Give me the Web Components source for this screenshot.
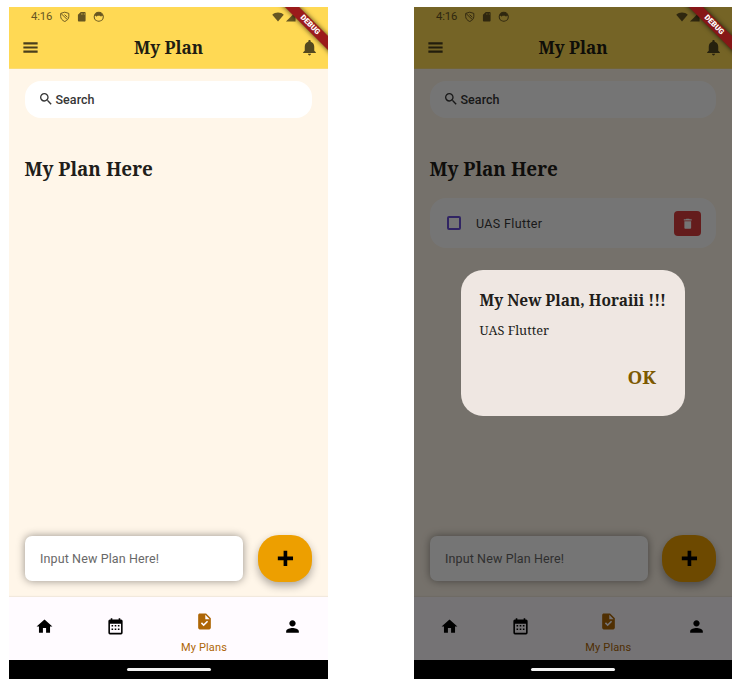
<!DOCTYPE html>
<html lang="en">
<head>
<meta charset="utf-8">
<title>My Plan</title>
<style>
html,body{margin:0;background:#fff;width:745px;height:689px;overflow:hidden}
body{font-family:Roboto,"Noto Sans",sans-serif}
main{display:grid;grid-template-columns:319px 318px;column-gap:86px;padding:7px 0 0 9px;height:672px}
</style>
</head>
<body>
<main>
<plan-phone>
  <plan-title-bar slot="top">My Plan</plan-title-bar>
  <plan-search>Search</plan-search>
  <plan-heading>My Plan Here</plan-heading>
</plan-phone>
<plan-phone dimmed>
  <plan-title-bar slot="top">My Plan</plan-title-bar>
  <plan-search>Search</plan-search>
  <plan-heading>My Plan Here</plan-heading>
  <plan-item>UAS Flutter</plan-item>
  <plan-dialog slot="dialog" heading="My New Plan, Horaiii !!!" action="OK">UAS Flutter</plan-dialog>
</plan-phone>
</main>
<script>
const ICONS = {
  menu:'<path d="M3 18.500h18v-2.600H3zm0-5.200h18v-2.600H3zm0-7.800v2.600h18V5.500z"/>',
  bell:'<path d="M12 22c1.1 0 2-.9 2-2h-4c0 1.1.9 2 2 2zm6-6v-5c0-3.070-1.630-5.640-4.500-6.320V4c0-.83-.67-1.500-1.500-1.500s-1.500.67-1.500 1.500v.68C7.640 5.360 6 7.920 6 11v5l-2 2v1h16v-1z"/>',
  search:'<path d="M15.500 14h-.79l-.28-.27A6.471 6.471 0 0 0 16 9.500 6.500 6.500 0 1 0 9.500 16c1.610 0 3.090-.59 4.230-1.570l.27.28v.79l5 4.990L20.490 19zm-6 0C7.010 14 5 11.990 5 9.500S7.010 5 9.500 5 14 7.010 14 9.500 11.990 14 9.500 14z"/>',
  home:'<path d="M10 20v-6h4v6h5v-8h3L12 3 2 12h3v8z"/>',
  calendar:'<path d="M9,10V12H7V10H9M13,10V12H11V10H13M17,10V12H15V10H17M19,3A2,2 0 0,1 21,5V20A2,2 0 0,1 19,22H5A2,2 0 0,1 3,20V5A2,2 0 0,1 5,3H6V1.500H8V3H16V1.500H18V3H19M19,20V8.500H5V20H19M9,14.500V16.500H7V14.500H9M13,14.500V16.500H11V14.500H13M17,14.500V16.500H15V14.500H17"/>',
  task:'<path d="M14 2H6c-1.100 0-1.990.9-1.990 2L4 20c0 1.100.89 2 1.990 2H18c1.100 0 2-.9 2-2V8zm-3.060 16L7.400 14.460l1.410-1.410 2.120 2.120 4.240-4.240 1.410 1.410zM13 9V3.500L18.500 9z"/>',
  person:'<path d="M12 12c2.210 0 4-1.790 4-4s-1.790-4-4-4-4 1.790-4 4 1.790 4 4 4zm0 2c-2.670 0-8 1.340-8 4v2h16v-2c0-2.660-5.330-4-8-4z"/>',
  plus:'<path d="M9.600 2.300h4.600v7.200h7.300v4.600h-7.300v7.400H9.600v-7.400H2.300V9.500h7.300z"/>',
  trash:'<path d="M6 19c0 1.100.9 2 2 2h8c1.100 0 2-.9 2-2V7.500H6zM19 4h-3.500l-1-1h-5l-1 1H5v2h14z"/>',
  shield:'<path fill="none" stroke="currentColor" stroke-width="2" d="M12 2.500L20.500 5v6.500c0 4.500-3.200 8-8.500 10.500-5.300-2.500-8.500-6-8.500-10.500V5zM4.500 5.500L17.500 18M11.500 7.500l6 5.500"/>',
  sd:'<path d="M18 2h-8L4 8v12c0 1.100.9 2 2 2h12c1.100 0 2-.9 2-2V4c0-1.100-.9-2-2-2zm-6 5.500h-1.300V5H12zm3 0h-1.300V5H15zm3 0h-1.300V5H18z"/>',
  face:'<circle cx="12" cy="12" r="9.500" fill="none" stroke="currentColor" stroke-width="2.200"/><path d="M3 10.500C4 5 7.500 2.500 12 2.500S20 5 21 10.500l-3-.5-1 2-2.500-2h-5L7 12l-1-2z"/>',
  wifi:'<path d="M12 21L.5 7.500C3.500 4.800 7.500 3 12 3s8.500 1.800 11.500 4.500z"/>',
  signal:'<path d="M2 22h20V2z"/>'
};

function define(name, render){
  customElements.define(name, class extends HTMLElement{
    connectedCallback(){
      if(this.shadowRoot) return;
      this.attachShadow({mode:'open'}).innerHTML = render(this);
    }
  });
}

define('plan-icon', el => `<style>:host{display:block;flex:none;width:var(--size,19px);height:var(--size,19px)}svg{display:block;width:100%;height:100%;fill:currentColor}</style>
<svg viewBox="0 0 24 24">${ICONS[el.getAttribute('name')]}</svg>`);

define('plan-title-bar', () => `<style>
:host{display:flex;flex-direction:column;height:62px;background:#ffd954;color:#54481f;box-sizing:border-box;border-bottom:1px solid #fbdc77}
.status{display:flex;align-items:center;height:19px;padding:0 32px 0 22px;font-size:11.300px;color:#675621}
.status span{width:28px;letter-spacing:-.15px;line-height:20px}
.status plan-icon{--size:11.500px}
.sp{flex:1}
.app{display:flex;align-items:center;height:42px;padding:0 9px 0 12px}
h1{flex:1;text-align:center;margin:0 3px 0 0;padding-top:2px;font:bold 17.100px/24px "Noto Serif","DejaVu Serif Condensed","DejaVu Serif",serif;color:#211d12;white-space:nowrap}
</style>
<div class="status"><span>4:16</span><plan-icon name="shield"></plan-icon><plan-icon name="sd" style="margin-left:5.500px"></plan-icon><plan-icon name="face" style="margin-left:5.500px"></plan-icon><div class="sp"></div><plan-icon name="wifi" style="--size:12px"></plan-icon><plan-icon name="signal" style="margin-left:1px"></plan-icon></div>
<div class="app"><plan-icon name="menu" style="color:#4a3f1c"></plan-icon><h1><slot></slot></h1><plan-icon name="bell"></plan-icon></div>`);

define('plan-search', () => `<style>
:host{display:flex;align-items:center;height:37px;border-radius:16px;background:#fff;margin:11.500px 16px 0;padding-left:13px;color:#363636;font-size:12.500px;font-weight:500}
plan-icon{margin-right:1.500px;--size:16px}
span{letter-spacing:.05px;padding-top:1px}
</style><plan-icon name="search"></plan-icon><span><slot></slot></span>`);

define('plan-heading', () => `<style>
:host{display:block;margin:37.500px 16px 0 15.500px;font:bold 18.900px/28px "Noto Serif","DejaVu Serif Condensed","DejaVu Serif",serif;color:#211d1a;white-space:nowrap}
</style><slot></slot>`);

define('plan-item', () => `<style>
:host{display:flex;align-items:center;height:50px;margin:14.500px 16px 0;padding:1px 15px 0 17px;box-sizing:border-box;border-radius:16px;background:#fff;color:#3a3a3a;font-size:12.500px;letter-spacing:.35px}
i{width:14px;height:14px;border:2px solid #6a4fd8;border-radius:2px;box-sizing:border-box}
span{flex:1;margin-left:15px;padding-top:1px}
b{display:grid;place-items:center;width:27px;height:25px;border-radius:4px;background:#da3d3d;color:#fff}
</style><i></i><span><slot></slot></span><b><plan-icon name="trash" style="--size:13.500px;margin-top:2px"></plan-icon></b>`);

define('plan-compose', () => `<style>
:host{display:flex;align-items:center;justify-content:space-between;margin:0 16px 15px 15.500px;height:47px}
.in{flex:0 0 218px;height:45px;box-sizing:border-box;padding-left:15.500px;border-radius:7px;background:#fff;color:#686868;font-size:12.500px;letter-spacing:.12px;line-height:46px;box-shadow:0 0 8px rgba(0,0,0,.42)}
.add{display:grid;place-items:center;width:54px;height:47px;border-radius:21px;background:#ed9f00;color:#000;box-shadow:0 4px 8px rgba(0,0,0,.32)}
</style><div class="in"><slot></slot></div><div class="add"><plan-icon name="plus"></plan-icon></div>`);

define('plan-nav', () => `<style>
:host{display:grid;grid-template-columns:71fr 71fr 106fr 71fr;height:63px;background:#fffbff;color:#000;box-shadow:0 -1px 1px rgba(0,0,0,.05)}
div{display:flex;flex-direction:column;align-items:center;padding-top:20px;box-sizing:border-box}
.on{color:#ae6606;padding-top:14.500px;font-size:11px;letter-spacing:.15px;line-height:13px}
span{margin-top:10px}
</style><div><plan-icon name="home"></plan-icon></div><div><plan-icon name="calendar"></plan-icon></div><div class="on"><plan-icon name="task"></plan-icon><span>My Plans</span></div><div><plan-icon name="person"></plan-icon></div>`);

define('plan-dialog', el => `<style>
:host{display:flex;flex-direction:column;width:224px;height:146px;border-radius:22px;background:#efe7e2;box-sizing:border-box;padding:19px 18px 0 18.500px;color:#211d1a;font-family:"Noto Serif","DejaVu Serif Condensed","DejaVu Serif",serif;white-space:nowrap}
h2{font-size:15.450px;line-height:22px;margin:0}
p{margin:9px 0 0;font-size:12.750px;line-height:20px}
b{align-self:flex-end;margin:23.500px 11px 0 0;font-size:18.800px;line-height:26px;color:#7d5900}
</style><h2>${el.getAttribute('heading')}</h2><p><slot></slot></p><b>${el.getAttribute('action')}</b>`);

define('plan-debug', () => `<style>
:host{display:block;position:absolute;right:0;top:0;width:60px;height:60px;overflow:hidden;pointer-events:none}
div{position:absolute;left:1.600px;top:13.400px;width:80px;height:10px;transform:rotate(45deg);background:var(--ribbon,#9b1b1b);color:#fff;font-size:7.600px;font-weight:900;line-height:10px;text-align:center;box-shadow:0 0 5px rgba(0,0,0,.75)}
</style><div>DEBUG</div>`);

define('plan-phone', () => `<style>
:host{display:flex;flex-direction:column;position:relative;height:672px;overflow:hidden;background:#fff6e9}
.body{flex:1;display:flex;flex-direction:column}
.grow{flex:1}
.scrim{display:none;position:absolute;inset:0;background:rgba(0,0,0,.54)}
:host([dimmed]) .scrim{display:grid;place-items:center}
:host([dimmed]) plan-debug{--ribbon:#861717}
.sys{height:19px;background:#000;display:grid;place-items:center}
.sys i{width:84px;height:3px;border-radius:2px;background:#f2f2f2;position:relative;z-index:2}
</style>
<slot name="top"></slot>
<div class="body"><slot></slot><div class="grow"></div><plan-compose>Input New Plan Here!</plan-compose></div>
<plan-nav></plan-nav>
<div class="sys"><i></i></div>
<div class="scrim"><slot name="dialog"></slot></div>
<plan-debug></plan-debug>`);
</script>
</body>
</html>
